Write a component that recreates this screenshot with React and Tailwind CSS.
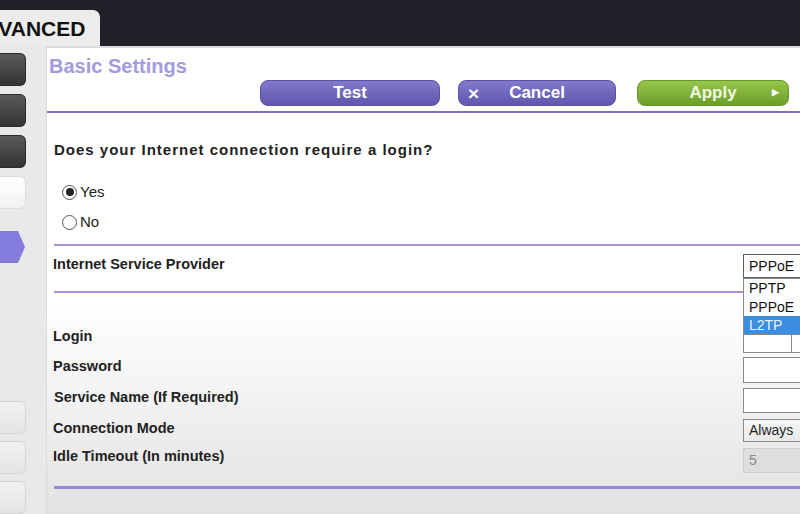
import React from "react";

const font = { fontFamily: '"Liberation Sans", Arial, sans-serif' };

function SideDark() {
  return <div className="h-[33px] w-[26px] rounded-r-[6px] bg-linear-to-b from-[#5a5a5a] to-[#343434] border border-l-0 border-[#2a2a2a]" />;
}
function SideLight() {
  return <div className="h-[33px] w-[26px] rounded-r-[6px] bg-linear-to-b from-[#f1f1f1] to-[#e4e4e4] border border-l-0 border-[#d6d6d6]" />;
}

export default function App() {
  return (
    <div className="w-[800px] h-[514px] overflow-hidden flex flex-col bg-[#e8e8e8] text-[#222]" style={font}>
      {/* top bar */}
      <div className="h-[46px] shrink-0 bg-[#1f2028] flex items-end">
        <div className="w-[100px] h-[36px] bg-[#ececec] rounded-tr-[7px] overflow-hidden flex items-center">
          <span className="ml-[-32px] text-[21px] font-bold text-[#111] whitespace-nowrap leading-none">ADVANCED</span>
        </div>
      </div>

      <div className="flex flex-1 min-h-0">
        {/* sidebar */}
        <div className="w-[47px] shrink-0 bg-[#e9e9e9] border-r border-[#dadada] flex flex-col pt-[7px]">
          <SideDark />
          <div className="h-[8px]" />
          <SideDark />
          <div className="h-[8px]" />
          <SideDark />
          <div className="h-[8px]" />
          <div className="h-[33px] w-[26px] rounded-r-[6px] bg-linear-to-b from-white to-[#f2f2f2] border border-l-0 border-[#dcdcdc]" />
          <div className="h-[21px]" />
          <svg width="26" height="34" viewBox="0 0 26 34">
            <path d="M0 1 H18 L25 17 L18 33 H0 Z" fill="#857ddd" />
          </svg>
          <div className="h-[137px]" />
          <SideLight />
          <div className="h-[7px]" />
          <SideLight />
          <div className="h-[7px]" />
          <SideLight />
        </div>

        {/* content */}
        <div className="flex-1 min-w-0 overflow-hidden border-t-[2px] border-[#dcdcdc] bg-linear-to-b from-white from-[55%] to-[#e2e2e2] flex flex-col">
          <div className="pl-[2px] pt-[7px] text-[20px] font-bold leading-[22px] text-[#a29be0]">Basic Settings</div>
          <div className="mt-[3px] flex justify-end pr-[11px] gap-[18px] h-[26px]">
            <div className="w-[180px] h-[26px] rounded-[8px] bg-linear-to-b from-[#8179cc] to-[#5f57ad] border border-[#5a52a6] flex items-center justify-center text-white font-bold text-[17px]">Test</div>
            <div className="w-[158px] h-[26px] rounded-[8px] bg-linear-to-b from-[#8179cc] to-[#5f57ad] border border-[#5a52a6] flex items-center text-white font-bold text-[17px] mr-[3px]">
              <span className="w-[30px] pl-[9px] text-[19px] leading-none">×</span>
              <span className="flex-1 text-center">Cancel</span>
              <span className="w-[30px]" />
            </div>
            <div className="w-[152px] h-[26px] rounded-[8px] bg-linear-to-b from-[#96c54a] to-[#6c9e2b] border border-[#67962a] flex items-center text-white font-bold text-[17px]">
              <span className="w-[24px]" />
              <span className="flex-1 text-center text-[#eef7e0]">Apply</span>
              <span className="w-[24px] text-[9px] pl-[8px]">▶</span>
            </div>
          </div>
          <div className="mt-[5px] h-[2px] bg-[#7a70c9]" />

          <div className="pl-[7px]">
            <div className="mt-[27px] text-[15px] font-bold leading-[20px] tracking-[1px] text-[#222]">Does your Internet connection require a login?</div>
            <label className="mt-[22px] ml-[8px] flex items-center gap-[3px] h-[20px] text-[15px]">
              <span className="w-[15px] h-[15px] rounded-full border border-[#555] flex items-center justify-center bg-white">
                <span className="w-[8px] h-[8px] rounded-full bg-[#222]" />
              </span>
              <span>Yes</span>
            </label>
            <label className="mt-[10px] ml-[8px] flex items-center gap-[3px] h-[20px] text-[15px]">
              <span className="w-[15px] h-[15px] rounded-full border border-[#555] bg-white" />
              <span>No</span>
            </label>
            <div className="mt-[12px] h-[2px] bg-[#ad8fdc]" />

            <div className="mt-[8px] grid grid-cols-[689px_120px] h-[24px]">
              <div className="text-[14.5px] font-bold leading-[20px] -ml-[1px]">Internet Service Provider</div>
              <div className="relative">
                <div className="h-[24px] border border-[#5e5e5e] bg-white text-[14px] leading-[22px] pl-[5px] text-[#111]">PPPoE</div>
                <div className="absolute left-0 top-[24px] w-[120px] h-[57px] z-10 bg-white border border-[#8a8a8a] text-[14px] leading-[18.5px] text-[#111]">
                  <div className="pl-[5px] h-[18.5px]">PPTP</div>
                  <div className="pl-[5px] h-[18.5px]">PPPoE</div>
                  <div className="pl-[5px] h-[18px] bg-[#3b8de0] text-[#e8f2ff]">L2TP</div>
                </div>
              </div>
            </div>
            <div className="mt-[13px] h-[2px] bg-[#ad8fdc]" />

            <div className="mt-[34px] flex flex-col text-[14.5px] font-bold leading-[18px]">
              <div className="grid grid-cols-[689px_120px] h-[30px]">
                <div className="-ml-[1px]">Login</div>
                <div className="mt-[1px] h-[25px] border border-[#8a8a8a] bg-white flex">
                  <div className="w-[48px] border-r border-[#8a8a8a]" />
                </div>
              </div>
              <div className="grid grid-cols-[689px_120px] h-[31px]">
                <div className="-ml-[1px]">Password</div>
                <div className="h-[26px] border border-[#8a8a8a] bg-white" />
              </div>
              <div className="grid grid-cols-[689px_120px] h-[31px]">
                <div>Service Name (If Required)</div>
                <div className="h-[25px] border border-[#8a8a8a] bg-white" />
              </div>
              <div className="grid grid-cols-[689px_120px] h-[28px]">
                <div className="-ml-[1px]">Connection Mode</div>
                <div className="h-[23px] border border-[#8a8a8a] bg-linear-to-b from-[#f7f7f7] to-[#e9e9e9] font-normal text-[14px] leading-[21px] pl-[5px] text-[#222]">Always</div>
              </div>
              <div className="grid grid-cols-[689px_120px] h-[26px]">
                <div className="-ml-[1px]">Idle Timeout (In minutes)</div>
                <div className="mt-[1px] h-[25px] border border-[#cfcfcf] bg-[#dedede] font-normal text-[14px] leading-[23px] pl-[5px] text-[#8a8a8a]">5</div>
              </div>
            </div>
            <div className="mt-[13px] h-[3px] bg-[#9a89d8]" />
          </div>
        </div>
      </div>
    </div>
  );
}
